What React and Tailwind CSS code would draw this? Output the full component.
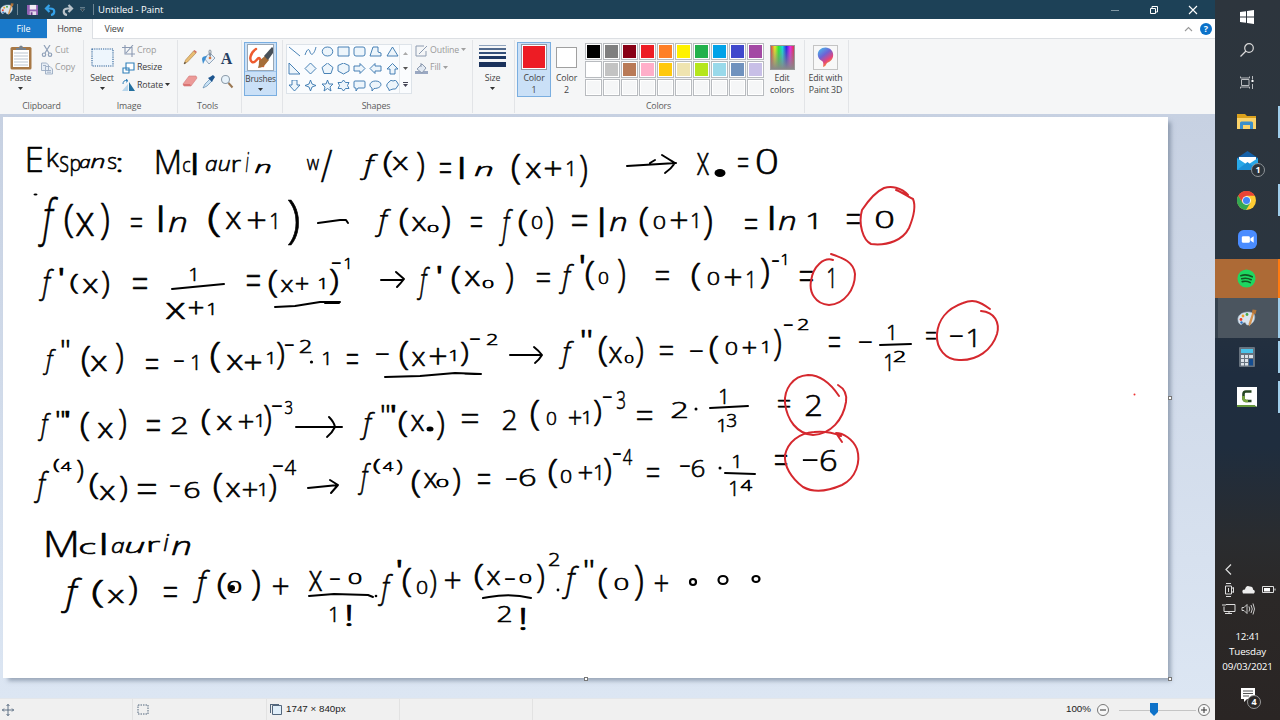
import React from "react";

/* ---------- handwriting on the canvas ---------- */

// Each entry: character, left, top, right, bottom of its ink on the page.
const LINES = [
  `E 28 147 42 172 k 48 148 59 167 s 60 156 68 172 p 71 159 80 176 a 80 159 90 168 n 91 158 104 168 s 108 157 116 169 : 118 158 121 172
   M 157 150 179 174 c 183 161 190 172 l 193 152 196 175 a 206 160 217 171 u 219 160 230 171 r 233 160 241 172 i 246 152 249 172 n 255 164 270 173
   w 307 159 319 170 / 321 150 332 182
   f 360 154 378 180 ( 384 151 392 177 x 393 157 408 170 ) 417 152 424 181 = 440 163 451 173 l 460 156 463 179 n 475 166 492 176
   ( 512 155 520 185 x 526 163 541 178 + 545 161 561 176 1 567 162 572 176 ) 580 155 587 187
   x 697 154 709 175 = 738 159 748 168 0 757 148 777 174`,
  `f 38 197 58 247 ( 65 205 73 238 x 76 214 94 236 ) 101 203 109 240 = 131 219 142 228 l 159 206 162 232 n 169 217 186 232
   ( 209 203 220 237 x 226 212 241 229 + 248 213 265 229 1 271 213 276 229 ) 288 200 299 245
   f 375 209 391 237 ( 400 208 408 235 x 412 217 426 231 0 428 225 438 232 ) 442 206 450 238
   = 471 217 482 227 f 499 209 513 246 ( 519 210 527 236 0 532 216 542 229 ) 546 207 553 239
   = 572 215 587 226 l 600 208 603 237 n 610 217 626 231 ( 640 207 648 236 0 654 215 665 229 + 671 213 687 229 1 692 214 697 228 ) 704 206 712 240
   = 745 219 757 229 l 770 206 773 230 n 779 216 795 230 1 808 213 816 229 = 847 214 860 224 0 876 210 893 228`,
  `f 39 270 54 301 ' 60 269 63 276 ( 71 274 78 293 x 83 279 98 293 ) 102 271 109 298 = 133 278 147 289
   1 190 268 195 281 x 166 303 185 319 + 189 301 203 314 1 208 303 213 315
   = 247 275 260 286 ( 269 270 277 297 x 281 280 293 292 + 296 278 308 290 1 319 278 324 289 ) 330 269 338 295 - 332 262 341 264 1 345 258 349 269
   f 417 267 430 300 ' 438 267 441 274 ( 452 266 460 293 x 465 271 480 286 0 483 280 493 288 ) 506 264 513 294
   = 537 274 550 283 f 559 265 574 294 ' 581 255 584 263 ( 586 261 594 290 0 599 272 608 284 ) 618 260 625 293
   = 656 272 669 281 ( 692 263 700 290 0 708 272 719 285 + 725 270 741 286 1 747 271 752 288 ) 761 258 769 289 - 772 260 779 262 1 782 254 786 265
   = 800 271 813 281 1 828 268 833 288`,
  `f 43 349 56 375 " 62 341 69 348 ( 82 346 90 377 x 91 356 107 371 ) 116 343 123 374 = 146 359 158 369 - 174 360 184 362 1 192 356 197 370
   ( 211 342 220 373 x 227 355 243 370 + 245 355 261 370 1 267 352 272 364 ) 277 342 284 369 - 285 344 294 346 2 300 340 311 353 1 323 352 328 365
   = 347 354 358 364 - 376 353 389 355 ( 400 342 408 370 x 412 352 425 366 + 430 349 446 365 1 450 350 455 361 ) 461 342 468 366 - 470 338 480 340 2 487 334 497 345
   f 559 341 574 369 " 582 331 591 338 ( 599 336 607 367 x 609 347 622 363 0 625 355 633 363 ) 636 338 643 368
   = 660 347 673 356 - 690 350 703 352 ( 710 336 718 363 0 726 342 737 355 + 743 342 756 354 1 762 341 767 353 ) 774 329 781 361 - 784 324 793 326 2 798 319 808 330
   = 829 337 840 347 - 859 341 872 343 1 888 326 893 340 1 885 354 890 371 2 894 352 905 362 = 926 332 936 340 - 950 335 963 337 1 968 328 975 347`,
  `f 38 413 51 440 " 57 411 64 417 ' 66 411 69 417 ( 81 412 89 441 x 98 423 113 438 ) 119 410 126 440 = 147 420 160 431 2 172 417 187 434
   ( 202 409 210 435 x 217 416 232 430 + 239 414 253 428 1 256 414 261 427 ) 264 406 271 436 - 272 405 282 407 3 285 400 292 414
   f 360 412 375 440 " 382 406 389 413 ' 392 406 395 413 ( 399 411 407 437 x 411 415 424 431 ) 437 411 444 440
   = 462 415 478 424 2 503 410 516 430 ( 531 400 539 431 0 547 411 556 425 + 569 410 581 424 1 583 411 588 424 ) 594 400 601 426 - 603 396 612 398 3 617 390 625 409
   = 637 412 652 421 2 672 402 687 418 1 720 390 725 404 1 718 419 723 432 3 727 413 736 427 = 778 400 790 408 2 806 394 821 416`,
  `f 34 472 49 503 ( 54 459 59 472 4 61 462 71 471 ) 77 460 83 482 ( 90 474 98 499 x 100 486 115 500 ) 120 476 127 502 = 138 484 156 494
   - 170 485 180 487 6 185 482 199 498 ( 214 474 222 502 x 226 483 240 497 + 243 482 257 496 1 259 483 264 496 ) 269 474 276 501 - 273 465 283 467 4 285 461 296 475
   f 358 464 371 495 ( 374 459 380 474 4 383 462 393 471 ) 397 460 402 475 ( 412 470 420 497 x 424 473 437 488 0 437 479 448 487 ) 453 468 460 495
   = 478 474 490 484 - 506 478 517 480 6 520 468 535 486 ( 549 460 557 488 0 561 470 571 483 + 579 466 592 479 1 595 466 600 480 ) 604 458 611 485 - 613 453 621 455 4 623 449 632 465
   = 647 469 659 478 - 680 465 690 467 6 692 459 704 477 1 733 455 738 468 1 730 481 735 496 4 741 481 752 491 = 775 455 787 465 - 803 459 818 461 6 821 449 836 471`,
  `M 47 531 76 557 c 80 543 95 554 l 102 533 105 555 a 112 542 124 553 u 126 542 144 553 r 149 541 160 552 i 164 534 169 551 n 172 541 190 555`,
  `f 61 578 82 613 ( 93 580 103 607 x 108 590 124 603 ) 129 577 137 605 = 164 587 177 597 f 193 570 210 603 ( 218 574 226 599 0 228 581 241 593 ) 252 570 260 601
   + 273 579 288 595 x 309 572 322 591 - 330 578 340 580 0 349 573 361 584 1 330 608 335 622 ! 347 604 351 626
   f 378 575 393 607 ' 398 561 401 568 ( 403 568 411 597 0 417 580 427 594 ) 430 570 436 597 + 445 573 460 589
   ( 475 564 483 590 x 487 571 500 585 - 505 578 515 580 0 520 573 531 583 ) 537 565 544 593 2 549 552 559 566 2 498 606 511 622 ! 521 607 525 630
   f 562 565 579 599 " 585 561 593 568 ( 599 568 607 599 0 615 578 628 590 ) 635 565 643 600 + 655 576 668 592`,
];

const HAND = "'Open Sans', 'Noto Sans', sans-serif";
const pen = document.createElement("canvas").getContext("2d");

// Size and stretch a character so that its ink fills the given box.
function fit(ch, x0, y0, x1, y1) {
  const style = "fauin".includes(ch) ? "italic" : "normal";
  pen.font = `${style} 300 100px ${HAND}`;
  const m = pen.measureText(ch);
  const size = (100 * (y1 - y0)) / (m.actualBoundingBoxAscent + m.actualBoundingBoxDescent);
  const k = size / 100;
  const sx = (x1 - x0) / ((m.actualBoundingBoxLeft + m.actualBoundingBoxRight) * k);
  return {
    x: x0 + m.actualBoundingBoxLeft * k * sx,
    y: y1 - m.actualBoundingBoxDescent * k,
    size,
    sx,
    style,
  };
}

function HandLine({ line }) {
  const t = line.trim().split(/\s+/);
  const glyphs = [];
  for (let i = 0; i < t.length; i += 5) {
    glyphs.push({ ch: t[i], ...fit(t[i], +t[i + 1], +t[i + 2], +t[i + 3], +t[i + 4]) });
  }
  return (
    <g>
      {glyphs.map((g, i) => (
        <text
          key={i}
          transform={`translate(${g.x} ${g.y}) scale(${g.sx} 1)`}
          fontSize={g.size}
          fontStyle={g.style}
          fontWeight="300"
          stroke={g.ch === "-" ? "none" : "#000"}
          strokeWidth="0.6"
          strokeLinejoin="round"
        >
          {g.ch}
        </text>
      ))}
    </g>
  );
}

function Drawing() {
  return (
    <svg viewBox="3 117 1165 561" className="block h-[561px] w-[1165px]" fontFamily={HAND} fill="#000">
      {LINES.map((l, i) => (
        <HandLine key={i} line={l} />
      ))}
      <g fill="none" stroke="#000" strokeWidth="2" strokeLinecap="round" strokeLinejoin="round">
        <path d="M627 166 676 163M650 163l5-3M662 155q8 5 13 8q-4 6-10 10" />
        <path d="M318 223 340 220 346 220 348 223" />
        <path d="M172 289 224 284M275 307l20-1 25-4h20M325 303h14" />
        <path d="M381 280h22M396 272l8 7q-3 4-7 8" />
        <path d="M385 377l35-1 35-3 26 1M465 374h16" />
        <path d="M510 355h31M534 347q5 4 8 8q-3 5-7 8" />
        <path d="M880 345l31-1" />
        <path d="M296 427h46M329 417q5 5 6 10-3 6-8 10" />
        <path d="M710 408l38-2" />
        <path d="M308 488l30-3M330 480l8 5-7 8" />
        <path d="M725 473l30 1" />
        <path d="M309 596l25-2 34 1 5 2" />
        <path d="M483 598l6-1q22-4 42 1" />
      </g>
      <ellipse cx="720" cy="173" rx="5.500" ry="4" />
      <ellipse cx="430" cy="429" rx="3.500" ry="2.500" />
      <ellipse cx="35.500" cy="194.500" rx="2" ry="1" />
      <circle cx="311.500" cy="362" r="1.600" />
      <circle cx="696" cy="409" r="1.500" />
      <circle cx="720" cy="468" r="1.500" />
      <circle cx="376" cy="596" r="1.300" />
      <circle cx="558" cy="590" r="1.400" />
      <circle cx="232" cy="588" r="3" />
      <g fill="none" stroke="#000" strokeWidth="2.200">
        <circle cx="693" cy="582" r="3" />
        <ellipse cx="723" cy="580" rx="4.500" ry="4" />
        <ellipse cx="756" cy="579" rx="3.500" ry="3" />
      </g>
      <g fill="none" stroke="#d5282e" strokeWidth="2" strokeLinecap="round" strokeLinejoin="round">
        <path d="M908 195C901 187 891 186 884 188C875 192 866 204 862 210C858 224 863 240 871 244C888 246 903 240 909 228C914 216 916 206 913 199C907 196 902 192 896 190" />
        <path d="M831 254C843 258 854 262 855 274C855 289 845 304 829 305C815 304 809 292 811 281C813 266 824 257 833 260" />
        <path d="M990 309C979 301 973 299 963 303C946 309 938 321 937 334C936 349 946 360 959 360C977 361 992 350 997 334C1000 323 995 312 981 311" />
        <path d="M839 396C831 384 821 375 808 375C792 376 784 390 785 403C787 420 797 434 813 435C831 434 843 420 846 402C847 395 845 389 838 385" />
        <path d="M842 442L836 433C843 433 853 439 857 449C861 462 856 478 842 485C826 492 814 493 803 487C791 478 784 466 785 455C788 442 799 433 814 432C825 431 834 433 841 436" />
      </g>
      <circle cx="1134.500" cy="394.500" r="1" fill="#e33" />
    </svg>
  );
}

/* ---------- small pieces ---------- */

const Caret = ({ c = "#333" }) => (
  <svg viewBox="0 0 5 3" className="h-[3px] w-[5px] shrink-0">
    <path d="M0 0h5L2.500 3z" fill={c} />
  </svg>
);

const Group = ({ className, label, children }) => (
  <div className={`flex h-[73px] shrink-0 flex-col border-r border-[#e2e4e7] ${className}`}>
    <div className="flex h-[61px] shrink-0">{children}</div>
    <div className="text-center leading-[10px] text-[#5c5c5c]">{label}</div>
  </div>
);

const Row = ({ icon, text, dim, caret }) => (
  <div className="flex h-[17.400px] items-center gap-[2px]">
    {icon}
    <span className={dim ? "text-[#9a9a9a]" : "text-[#3a3a3a]"}>{text}</span>
    {caret && <span className="mb-[2px] flex"><Caret c={dim ? "#a0a0a0" : "#333"} /></span>}
  </div>
);

/* ---------- icons ---------- */

const PaletteIcon = ({ className }) => (
  <svg viewBox="0 0 20 18" className={className}>
    <path d="M1 11C0 6 5 2.500 11 2.500s7.500 3 6.500 7-4 6-7 6c-2 0-1-2.500-3-2.500S5 16 3.500 15 1.300 13 1 11z" fill="#d9e4ee" stroke="#9fb7c9" strokeWidth=".6" />
    <circle cx="4" cy="10" r="1.400" fill="#e33e2b" />
    <circle cx="6" cy="6.500" r="1.400" fill="#f0a02a" />
    <circle cx="10" cy="5" r="1.400" fill="#46a648" />
    <circle cx="4.500" cy="13" r="1.200" fill="#2a6fc0" />
    <path d="M18 1.500l-4 13-2 2.500-.3-3L16 1z" fill="#d69552" />
    <path d="M15.500 0l4 .5-1 4-3.500-1z" fill="#b17439" />
  </svg>
);

const SHAPES = [
  "M1 1 12 10", "M1 9C3 3 5 2 6 6S10 9 12 1", "M6.500 1C13.500 1 13.500 10 6.500 10S-.5 1 6.500 1z", "M1 1H12V10H1z", "M3 1H10Q12 1 12 3V8Q12 10 10 10H3Q1 10 1 8V3Q1 1 3 1z", "M1 10 4 1H9V6L12 7V10z", "M6.500 1 12 10H1z",
  "M1 0V11H12z", "M6.500 0 12 5.500 6.500 11 1 5.500z", "M6.500 0 12 4.500 10 10.500H3L1 4.500z", "M6.500 0 12 2.500V8L6.500 11 1 8V2.500z", "M1 3H7V.5L12 5.500 7 10.500V8H1z", "M12 3H6V.5L1 5.500 6 10.500V8H12z", "M4 11V6H1L6.500 .5 12 6H9V11z",
  "M4 0V5H1L6.500 11 12 5H9V0z", "M6.500 0 8 4 12 5.500 8 7 6.500 11 5 7 1 5.500 5 4z", "M6.500 0 8 4H12L9 7 10 11 6.500 8.500 3 11 4 7 1 4H5z", "M6.500 0 8.500 2.500 12 2.500 10.500 5.500 12 8.500H8.500L6.500 11 4.500 8.500H1L2.500 5.500 1 2.500H4.500z", "M2 1H11Q12 1 12 2V7Q12 8 11 8H5L3 11V8H2Q1 8 1 7V2Q1 1 2 1z", "M6.500 1C14 1 14 8.500 5 8.500L3 11V8C-1 6 1 1 6.500 1z", "M3 2Q5-1 7 1Q10-1 11 2Q14 5 11 7Q10 10 7 9Q4 10 3 10.500Q3 9 2 8Q-1 5 3 2z",
];

const COLORS = [
  ["#000000", "#7f7f7f", "#880015", "#ed1c24", "#ff7f27", "#fff200", "#22b14c", "#00a2e8", "#3f48cc", "#a349a4"],
  ["#ffffff", "#c3c3c3", "#b97a57", "#ffaec9", "#ffc90e", "#efe4b0", "#b5e61d", "#99d9ea", "#7092be", "#c8bfe7"],
  Array(10).fill("#f5f6f7"),
];

/* ---------- window chrome ---------- */

function TitleBar() {
  return (
    <div className="flex h-[19px] items-center bg-[#1d4157] text-white">
      <PaletteIcon className="h-[13px] w-[14px]" />
      <div className="ml-[3px] h-[11px] w-px bg-[#6d8594]" />
      <svg viewBox="0 0 12 12" className="ml-[9px] h-[11px] w-[11px]">
        <path d="M0 1h12v11H1L0 11z" fill="#9262b4" />
        <path d="M3 1h7v5H3z" fill="#f2eef6" />
        <path d="M3 8h7v4H3z" fill="#e5dded" />
        <path d="M4 9h2v3H4z" fill="#6b3f8c" />
      </svg>
      <svg viewBox="0 0 12 12" className="ml-[6px] h-[12px] w-[12px]">
        <path d="M2 4.500h4c6 0 5 6 1 6.500M5.500 1 2 4.500 5.500 8" fill="none" stroke="#35a1e8" strokeWidth="2.200" />
      </svg>
      <svg viewBox="0 0 12 12" className="ml-[6px] h-[12px] w-[12px]">
        <path d="M10 4.500H6c-6 0-5 6-1 6.500M6.500 1 10 4.500 6.500 8" fill="none" stroke="#b9c3ca" strokeWidth="2.200" />
      </svg>
      <svg viewBox="0 0 5 5" className="ml-[6px] h-[5px] w-[5px]">
        <path d="M0 .5h5M.5 2h4L2.500 4.500z" stroke="#a9b8c1" strokeWidth=".5" fill="#10202b" />
      </svg>
      <div className="ml-[8px] h-[11px] w-px bg-[#6d8594]" />
      <span className="ml-[4px] text-[9.500px] leading-[12px] tracking-[-0.050px]">Untitled - Paint</span>
      <svg viewBox="0 0 94 12" className="mr-[16px] ml-auto h-[12px] w-[94px]" fill="none" stroke="#fff">
        <path d="M6 6.500h8" stroke="#8198a5" />
        <path d="M45.500 4.500h5v5h-5zM47 4V2.500h5.500V8h-1.500" />
        <path d="M84 2l8 8M92 2l-8 8" strokeWidth="1.100" />
      </svg>
    </div>
  );
}

function Tabs() {
  return (
    <div className="flex h-[20px] items-stretch border-b border-[#dcdfe3] bg-white text-center text-[9px] leading-[19px] text-[#444]">
      <div className="h-[19px] w-[47px] bg-[#1979ca] text-white">File</div>
      <div className="h-[20px] w-[46px] border-r border-[#dcdfe3] bg-[#f5f6f7] tracking-[-0.200px]">Home</div>
      <div className="w-[42px] tracking-[-0.200px]">View</div>
      <div className="mr-[3px] ml-auto flex items-center gap-[7px]">
        <svg viewBox="0 0 9 6" className="h-[6px] w-[9px]"><path d="M1 5 4.500 1.500 8 5" fill="none" stroke="#999" strokeWidth="1.100" /></svg>
        <span className="h-[12px] w-[12px] rounded-full bg-[#0b72c9] text-center text-[9px] leading-[12px] font-bold text-white">?</span>
      </div>
    </div>
  );
}

function Ribbon() {
  return (
    <div className="flex h-[75px] bg-[#f5f6f7] pt-[1px] text-[8.800px] tracking-[-0.150px] text-[#444]">
      <Group className="w-[84px]" label="Clipboard">
        <div className="flex w-[41px] flex-col items-center pt-[5px]">
          <svg viewBox="0 0 22 25" className="h-[25px] w-[22px]">
            <rect x=".5" y="2" width="21" height="22.500" rx="1.500" fill="#a87845" />
            <path d="M3 5h16v17H3z" fill="#fff" />
            <path d="M4 8h14M4 11h14M4 14h14M4 17h14M4 20h14" stroke="#a9b6c4" strokeWidth=".8" />
            <path d="M6 5V3h3q0-2.500 2-2.500T13 3h3v2z" fill="#77818c" />
          </svg>
          <span className="mt-[2px] leading-[12px]">Paste</span>
          <span className="mt-[3px] flex"><Caret /></span>
        </div>
        <div className="flex flex-col pt-[2px]">
          <Row dim text="Cut" icon={
            <svg viewBox="0 0 12 12" className="h-[12px] w-[12px]" fill="none" stroke="#8fa0b8" strokeWidth="1.200"><path d="M3 0l5 8M9 0L4 8" /><circle cx="3" cy="9.700" r="1.700" /><circle cx="9" cy="9.700" r="1.700" /></svg>} />
          <Row dim text="Copy" icon={
            <svg viewBox="0 0 12 12" className="h-[13px] w-[12px]" fill="#e6edf5" stroke="#9bacc3" strokeWidth=".9"><path d="M.5.500h5l2 2V8h-7zM4.500 4h4.500l2.500 2.500v5h-7zM6 8h4M6 9.700h4M2 3h3" /></svg>} />
        </div>
      </Group>

      <Group className="w-[94px] pr-[3px]" label="Image">
        <div className="flex w-[36px] flex-col items-center pt-[5px]">
          <svg viewBox="0 0 23 25" className="h-[25px] w-[23px]"><rect x="1" y="4" width="21" height="17" fill="#eef6fd" stroke="#285e96" strokeWidth="1.100" strokeDasharray="1.200 1" /></svg>
          <span className="mt-[2px] leading-[12px]">Select</span>
          <span className="mt-[3px] flex"><Caret /></span>
        </div>
        <div className="ml-[2px] flex flex-col pt-[2px]">
          <Row dim text="Crop" icon={
            <svg viewBox="0 0 13 12" className="h-[12px] w-[13px]" fill="none" stroke="#8b9ab3" strokeWidth="1.100"><path d="M3 0v9h10M0 2.500h10V12M4 8l7-8" /></svg>} />
          <Row text="Resize" icon={
            <svg viewBox="0 0 13 12" className="h-[12px] w-[13px]" fill="#fff" stroke="#2f7fb9" strokeWidth="1.100"><path d="M4 1h8v7H4zM1 6h6v5H1z" /></svg>} />
          <Row text="Rotate" caret icon={
            <svg viewBox="0 0 13 12" className="h-[12px] w-[13px]"><path d="M0 12h6V5z" fill="#b8d6ec" /><path d="M7 12h6L7 3z" fill="#24709f" /><path d="M1 5q0-4 4-3.500M4 0l2 1.700-2 1.600" fill="none" stroke="#2f7fb9" /></svg>} />
        </div>
      </Group>

      <Group className="w-[64px] pr-[4px]" label="Tools">
        <svg viewBox="178 39 63 61" className="h-[61px] w-[63px] shrink-0">
          <path d="M184 63l1.500-4 8-9 2.500 2-8.500 9z" fill="#e9bd73" stroke="#9a7138" strokeWidth=".5" />
          <path d="M184 63l.8-2 1.300 1z" fill="#333" /><path d="M193.500 50l1-1 2.500 2-1 1z" fill="#d46c5d" />
          <path d="M204 57l6-5 5 5-6 6z" fill="#e8eef5" stroke="#7790ac" strokeWidth=".8" /><path d="M210 55q-2-6 0-6t0 7" fill="none" stroke="#7f8c99" /><path d="M202 58q0-3 5-3l-2 4-2 4z" fill="#3e8fd2" /><circle cx="210" cy="57" r="1.300" fill="#d77a40" />
          <text x="226.500" y="62.500" textAnchor="middle" fontFamily="Liberation Serif" fontWeight="700" fontSize="16" fill="#263f63">A</text>
          <path d="M183 83l6-8h7l1 2-6 8h-7z" fill="#ec9a98" stroke="#d27a7b" strokeWidth=".6" /><path d="M183 83l1 2h7l-1-2z" fill="#d97473" />
          <path d="M203 87l2-4 5-5 2 2-5 5z" fill="#c9e2f5" stroke="#4a7aa5" strokeWidth=".6" /><path d="M208 77l2-1 3-2 2 2-2 3-1 2z" fill="#1d558f" />
          <circle cx="225.500" cy="78.500" r="4" fill="#e8f3fb" stroke="#8e9dab" strokeWidth="1.100" /><path d="M228.500 82l4 4.500" stroke="#9a7752" strokeWidth="2" />
        </svg>
      </Group>

      <Group className="w-[41px]" label="">
        <div className="ml-[2px] mt-[2px] flex h-[54px] w-[33px] flex-col items-center border border-[#7aaee0] bg-[#cae0f7] pt-[1px]">
          <svg viewBox="0 0 27 27" className="h-[27px] w-[27px] shrink-0">
            <rect x=".5" y=".5" width="26" height="26" fill="#fff" stroke="#99a7b5" />
            <path d="M9 5C3 9 2 16 5 18s5-4 7-4 1 6 4 8" fill="none" stroke="#ee5b2e" strokeWidth="2.500" strokeLinecap="round" />
            <path d="M12 17l6-5 4 4-5 6q-3 2-6 2 1-2 1-7z" fill="#a56d38" />
            <path d="M17 12l8-9 1 1v5l-5 7z" fill="#485058" />
          </svg>
          <div className="w-full border-t border-[#a5c8ec] text-center text-[8.300px] leading-[13px]">Brushes</div>
          <span className="mt-[3px] flex"><Caret /></span>
        </div>
      </Group>

      <Group className="w-[190px] pr-[3px]" label="Shapes">
        <div className="mt-[4px] ml-[3px] flex h-[50px] w-[126px] border border-[#dde3e9] bg-[#fafcfe]">
          <div className="grid w-[113px] grid-cols-7 grid-rows-3 gap-x-[3px] gap-y-[4.500px] pt-[1px] pl-px">
            {SHAPES.map((d, i) => (
              <svg key={i} viewBox="0 0 13 11.500" className="h-[11.500px] w-[13px]"><path d={d} fill={i < 2 ? "none" : "#edf5fb"} stroke="#3575ae" strokeWidth=".9" /></svg>
            ))}
          </div>
          <div className="flex w-[12px] flex-col items-center justify-between border-l border-[#e4e8ec] pt-[7px] pb-[6px]">
            <span className="rotate-180"><Caret c="#aaa" /></span>
            <Caret c="#555" />
            <div className="flex flex-col items-center gap-px"><div className="h-px w-[5px] bg-[#445]" /><Caret c="#445" /></div>
          </div>
        </div>
        <div className="ml-[3px] flex flex-col pt-[2px]">
          <Row dim caret text="Outline" icon={
            <svg viewBox="0 0 13 12" className="h-[12px] w-[13px]" fill="none" stroke="#8d9bb0"><path d="M9 1H1v10h10V6M4 9l8-8" /></svg>} />
          <Row dim caret text="Fill" icon={
            <svg viewBox="0 0 13 12" className="h-[12px] w-[13px]"><path d="M0 9h13v3H0z" fill="#9aa8c2" /><path d="M2 7l5-5 4 4-4 5z" fill="#e2e9f2" stroke="#8d9bb0" /><path d="M6 5V1" stroke="#8d9bb0" /></svg>} />
        </div>
      </Group>

      <Group className="w-[42px] pr-[2px]" label="">
        <div className="flex w-full flex-col items-center pt-[5px]">
          <div className="flex h-[25px] w-[27px] flex-col">
            <div className="h-[1px] bg-[#8fa3bd]" /><div className="mt-[2px] h-[2px] bg-[#51698c]" /><div className="mt-[2px] h-[2px] bg-[#35507a]" /><div className="mt-[2px] h-[3px] bg-[#1e3763]" /><div className="mt-[3px] h-[5px] bg-[#1a315b]" />
          </div>
          <span className="mt-[2px] leading-[12px]">Size</span>
          <span className="mt-[3px] flex"><Caret /></span>
        </div>
      </Group>

      <Group className="w-[290px] pr-[2px]" label="Colors">
        <div className="mt-[2px] ml-[2px] flex h-[55px] w-[34px] shrink-0 flex-col items-center border border-[#7aaee0] bg-[#cae0f7] pt-[1px] text-center leading-[12px]">
          <div className="h-[26px] w-[26px] border border-[#939ba6] bg-white p-px"><div className="h-full bg-[#ed1c24]" /></div>
          <span className="mt-[2px]">Color<br />1</span>
        </div>
        <div className="flex w-[31px] shrink-0 flex-col items-center pt-[7px] text-center leading-[12px]">
          <div className="h-[21px] w-[21px] border border-[#a0a0a0] bg-white" />
          <span className="mt-[4px]">Color<br />2</span>
        </div>
        <div className="mt-[3px] ml-[3px] grid h-[53px] shrink-0 grid-cols-10 gap-x-[1px] gap-y-[1px]">
          {COLORS.flat().map((c, i) => (
            <div key={i} className="h-[17px] w-[17px] border border-[#b8bbbf] bg-white p-px"><div className="h-full" style={{ background: c }} /></div>
          ))}
        </div>
        <div className="ml-[2px] flex w-[32px] shrink-0 flex-col items-center pt-[5px] text-center leading-[12px]">
          <div className="h-[25px] w-[25px] border border-[#999] bg-[linear-gradient(to_bottom,transparent,#888),linear-gradient(to_right,#d44,#ee2,#2e3,#1dd,#22e,#e2e,#d34)]" />
          <span className="mt-[2px]">Edit<br />colors</span>
        </div>
      </Group>

      <Group className="w-[44px]" label="">
        <div className="flex w-[41px] flex-col items-center pt-[5px] text-center leading-[12px]">
          <svg viewBox="0 0 25 25" className="h-[25px] w-[25px]">
            <defs><linearGradient id="drop" x1="0" y1="0" x2=".6" y2="1"><stop offset="0" stopColor="#43c8ef" /><stop offset=".45" stopColor="#6d63d5" /><stop offset=".75" stopColor="#e5447b" /><stop offset="1" stopColor="#f9a51b" /></linearGradient></defs>
            <rect x=".5" y=".5" width="24" height="24" fill="#f8f8f8" stroke="#c4c4c4" />
            <path d="M12.500 2.500C3 3 3 13 9 16q2 1 1 6 3-1 4-4C23 15 22 3 12.500 2.500z" fill="url(#drop)" />
          </svg>
          <span className="mt-[2px] whitespace-nowrap">Edit with<br />Paint 3D</span>
        </div>
      </Group>
    </div>
  );
}

function StatusBar() {
  return (
    <div className="flex h-[22px] items-center border-t border-[#e3e6ea] bg-[#f0f0f0] text-[9.800px] text-[#222]">
      <div className="flex h-full w-[133px] items-center border-r border-[#e2e2e2] pl-[2px]">
        <svg viewBox="0 0 12 12" className="h-[12px] w-[12px]" fill="none" stroke="#54687e"><path d="M6 0v12M0 6h12M4.500 2 6 .500 7.500 2M4.500 10 6 11.500 7.500 10M2 4.500.500 6 2 7.500M10 4.500 11.500 6 10 7.500" strokeWidth=".9" /></svg>
      </div>
      <div className="flex h-full w-[134px] items-center border-r border-[#e2e2e2] pl-[4px]">
        <svg viewBox="0 0 12 11" className="h-[11px] w-[12px]"><rect x="1" y="1" width="10" height="9" fill="none" stroke="#53677d" strokeDasharray="1.500 1" /></svg>
      </div>
      <div className="flex h-full w-[133px] items-center border-r border-[#e2e2e2] pl-[3px]">
        <svg viewBox="0 0 12 11" className="h-[11px] w-[12px]" fill="#e1effa" stroke="#53677d"><path d="M2.500 1.500h9v9h-9zM0 .500h9M.500 0v9" /></svg>
        <span className="ml-[4px] font-['Liberation_Sans']">1747 × 840px</span>
      </div>
      <div className="h-full w-[133px] border-r border-[#e2e2e2]" />
      <div className="mr-[4px] ml-auto flex items-center">
        <span className="mr-[6px] font-['Liberation_Sans']">100%</span>
        <svg viewBox="1097 0 114 20" className="h-[20px] w-[114px]" fill="none" stroke="#777">
          <circle cx="1103" cy="10" r="5.500" fill="#f7f7f7" /><path d="M1100 10h6" stroke="#333" />
          <path d="M1119 10.500h77" stroke="#c5c5c5" />
          <path d="M1150 3h8v9l-4 4-4-4z" fill="#0e72c9" stroke="none" />
          <circle cx="1204" cy="10" r="5.500" fill="#f7f7f7" /><path d="M1201 10h6M1204 7v6" stroke="#333" />
        </svg>
      </div>
    </div>
  );
}

/* ---------- taskbar ---------- */

const Slot = ({ children, className = "", edge = "bg-[#9fcdea]", tall }) => (
  <div className={`flex h-[39.300px] items-center ${className}`}>
    <div className="flex flex-1 items-center justify-center">{children}</div>
    {edge && <div className={`w-[2px] ${tall ? "h-full" : "h-[32px]"} ${edge}`} />}
  </div>
);

function Taskbar() {
  return (
    <div className="flex h-[720px] w-[65px] flex-col bg-[linear-gradient(#2d353d,#2b353f_35%,#1f2d3f_52%,#1f2d3e_62%,#2a2c2f_75%,#2b2827_83%,#2a2524)] text-white">
      <div className="flex h-[102px] flex-col items-center pt-[10px] pr-[1px]">
        <svg viewBox="0 0 14 14" className="h-[14px] w-[14px]" fill="#fff"><path d="M0 2l6-.8v5.400H0zM7 1l7-1v6.600H7zM0 7.500h6v5.300L0 12zM7 7.500h7V14l-7-1z" /></svg>
        <svg viewBox="0 0 14 14" className="mt-[19px] h-[14px] w-[14px]" fill="none" stroke="#dadada" strokeWidth="1.200"><circle cx="9" cy="5" r="4.300" /><path d="M6 8 .500 13.500" /></svg>
        <svg viewBox="0 0 14 13" className="mt-[19px] h-[13px] w-[14px]" fill="none" stroke="#b9bcbf"><path d="M1.500 3.500h7.500v6H1.500zM.5.500v1.500h9V.500M.5 12.500V11h9v1.500M12.500 0v3.500M12.500 8v5" /><path d="M11.500 5h2" strokeWidth="2" stroke="#fff" /></svg>
      </div>
      <Slot>
        <svg viewBox="0 0 19 16" className="h-[16px] w-[19px]"><path d="M0 0h8l2 2h9v13H0z" fill="#dca21d" /><path d="M0 4h19v11H0z" fill="#fbd36a" /><path d="M3 15V9q0-1.500 1.500-1.500h10Q16 7.500 16 9v6h-3v-4H6v4z" fill="#3b8fcb" /></svg>
      </Slot>
      <Slot edge="">
        <div className="relative h-[20px] w-[21px]">
          <svg viewBox="0 0 21 20" className="h-[20px] w-[21px]"><path d="M0 7 10.500 0 21 7v12H0z" fill="#1460a8" /><path d="M2 6h17v10H2z" fill="#fff" /><path d="M0 7l10.500 7L21 7v12H0z" fill="#28a8e8" /><path d="M0 19 10.500 11 21 19z" fill="#1a8fd6" /></svg>
          <div className="absolute top-[12px] left-[14px] h-[14px] w-[14px] rounded-full border border-[#8e9499] bg-[#2c343b] text-center text-[9px] leading-[12px] font-bold">1</div>
        </div>
      </Slot>
      <Slot>
        <svg viewBox="0 0 20 20" className="h-[19px] w-[19px]"><circle cx="10" cy="10" r="10" fill="#fc3" /><path d="M1.300 5A10 10 0 0 1 18.700 5H10L6 12.500z" fill="#ea4335" /><path d="M1.300 5A10 10 0 0 0 9.500 20L14 12.500H6z" fill="#34a853" /><circle cx="10" cy="10" r="4.600" fill="#fff" /><circle cx="10" cy="10" r="3.700" fill="#4285f4" /></svg>
      </Slot>
      <Slot edge="">
        <svg viewBox="0 0 20 20" className="h-[19px] w-[19px]"><rect width="20" height="20" rx="6" fill="#4a8cff" /><rect x="4" y="6.500" width="8.500" height="7" rx="1.500" fill="#fff" /><path d="M13 9l3.500-2.300v6.600L13 11z" fill="#fff" /></svg>
      </Slot>
      <Slot className="bg-[#ad6a36]" edge="bg-[#ff7a0f]" tall>
        <svg viewBox="0 0 20 20" className="h-[19px] w-[19px]"><circle cx="10" cy="10" r="9.500" fill="#1ed760" /><path d="M4 7q6-2 12 1.200M5 10.300q5-1.500 10 1M5.500 13.300q4.500-1.200 8.500 1" fill="none" stroke="#152" strokeWidth="1.700" strokeLinecap="round" /></svg>
      </Slot>
      <Slot className="border-l-[3px] border-[#35414d] bg-[#4b555f]" edge="bg-[#9fcdea]" tall>
        <PaletteIcon className="mr-[3px] h-[19px] w-[20px]" />
      </Slot>
      <Slot>
        <svg viewBox="0 0 16 20" className="h-[20px] w-[16px]"><rect width="16" height="20" rx="1" fill="#68737f" /><path d="M2 2h12v4H2z" fill="#4ac4eb" /><path d="M2 8h3v3H2zM6 8h3v3H6zM10 8h4v3h-4zM2 12h3v3H2zM6 12h3v3H6zM2 16h3v2.500H2zM6 16h3v2.500H6z" fill="#dce2e8" /><path d="M10 12h4v6.500h-4z" fill="#164e91" /></svg>
      </Slot>
      <Slot>
        <svg viewBox="0 0 20 20" className="h-[20px] w-[20px]"><path d="M0 0h20v20l-3-2H0z" fill="#fff" /><path d="M0 18h17l3 2H0z" fill="#66973b" /><path d="M14.500 4.500H9Q6.500 4.500 6.500 7v4q0 3 2.500 3h5.500" fill="none" stroke="#264521" strokeWidth="2.600" /><path d="M6.500 9v2q0 3 2.500 3h2" fill="none" stroke="#79a63f" strokeWidth="2.600" /></svg>
      </Slot>

      <div className="mt-auto flex h-[158px] flex-col">
        <svg viewBox="1215 562 65 56" className="h-[56px] w-[65px]" fill="none" stroke="#ddd">
          <path d="M1231 564.500l-5 5 5 5" strokeWidth="1.200" />
          <path d="M1225.500 586h6v8h-6zM1226 583.500h5M1226 596.500h5M1231.500 588.500l2-1v5l-2-1M1228.500 588v4" />
          <path d="M1243 593.500q-2-4 2-4 1-5 5-3 3 0 3 3 3 1 1 4z" fill="#eee" stroke="none" />
          <path d="M1262.500 586.500h11v6h-11zM1275 588.500v2" /><path d="M1264 588h6v3.500h-6z" fill="#fff" stroke="none" />
          <path d="M1226 604.500h9v7h-11v-5M1222 605h4M1225 613.500h7M1229 611v2" />
          <path d="M1242 607.500h2l3-3v9l-3-3h-2zM1249 606.500q1.500 2.500 0 5M1251 605q2.500 4 0 8M1253 603.500q3 5.500 0 11" strokeWidth=".9" />
        </svg>
        <div className="mt-[11px] text-center text-[9.800px] leading-[15px] tracking-[-0.150px]">
          <div>12:41</div><div>Tuesday</div><div>09/03/2021</div>
        </div>
        <div className="relative mt-[14px] ml-[26px] h-[16px] w-[14px]">
          <svg viewBox="0 0 14 14" className="h-[14px] w-[14px]"><path d="M0 0h14v11H6l-3 3v-3H0z" fill="#fff" /><path d="M2 3h10M2 5.500h10M2 8h6" stroke="#555" /></svg>
          <div className="absolute top-[7px] left-[6px] h-[14px] w-[14px] rounded-full border border-[#999] bg-[#2b2827] text-center text-[9px] leading-[12px] font-bold">4</div>
        </div>
      </div>
    </div>
  );
}

export default function App() {
  return (
    <div className="flex h-[720px] w-[1280px] overflow-hidden bg-[#2b2827] font-['Open_Sans','Noto_Sans',sans-serif]">
      <div className="flex w-[1215px] flex-col">
        <TitleBar />
        <Tabs />
        <Ribbon />
        <div className="relative min-h-0 flex-1 bg-[linear-gradient(#c7d1e2,#dce6f3)] pt-[3px] pl-[3px]">
          <div className="h-[561px] w-[1165px] bg-white shadow-[4px_4px_4px_-1px_rgba(90,105,130,0.5)]">
            <Drawing />
          </div>
          <div className="absolute top-[563px] left-[584px] h-[4px] w-[4px] border border-[#777] bg-white" />
          <div className="absolute top-[282px] left-[1168px] h-[4px] w-[4px] border border-[#777] bg-white" />
          <div className="absolute top-[563px] left-[1168px] h-[4px] w-[4px] border border-[#777] bg-white" />
        </div>
        <StatusBar />
      </div>
      <Taskbar />
    </div>
  );
}
